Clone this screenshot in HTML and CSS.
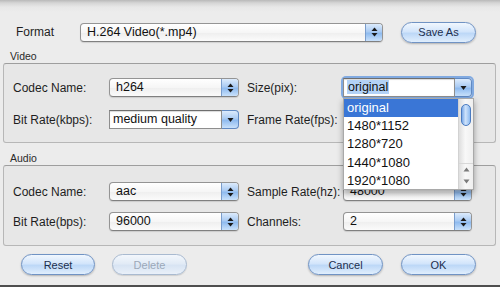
FILE: index.html
```html
<!DOCTYPE html>
<html>
<head>
<meta charset="utf-8">
<link rel="stylesheet" href="styles.css">
</head>
<body>
<div class="window">
  <div class="format-row">
    <span class="lbl format-lbl">Format</span>
    <div class="popup format-popup">
      <span class="val">H.264 Video(*.mp4)</span>
      <span class="stepper"><svg width="7" height="10" viewBox="0 0 7 10"><polygon points="3.5,0.5 6.5,4 0.5,4" fill="#1a1a1a"/><polygon points="0.5,6 6.5,6 3.5,9.5" fill="#1a1a1a"/></svg></span>
    </div>
    <button class="btn saveas">Save As</button>
  </div>

  <div class="group-title">Video</div>
  <div class="group video">
    <span class="lbl">Codec Name:</span>
    <div class="popup">
      <span class="val">h264</span>
      <span class="stepper"><svg width="7" height="10" viewBox="0 0 7 10"><polygon points="3.5,0.5 6.5,4 0.5,4" fill="#1a1a1a"/><polygon points="0.5,6 6.5,6 3.5,9.5" fill="#1a1a1a"/></svg></span>
    </div>
    <span class="lbl">Size(pix):</span>
    <div class="combo focused">
      <span class="field"><span class="sel">original</span></span>
      <span class="cbtn"><svg width="7" height="6" viewBox="0 0 7 6"><polygon points="0.5,1 6.5,1 3.5,5" fill="#1a1a1a"/></svg></span>
      <div class="list">
        <div class="items">
          <div class="item hl">original</div>
          <div class="item">1480*1152</div>
          <div class="item">1280*720</div>
          <div class="item">1440*1080</div>
          <div class="item">1920*1080</div>
        </div>
        <div class="scroll">
          <div class="thumb"></div>
          <div class="arrows">
            <svg width="7" height="5" viewBox="0 0 7 5"><polygon points="3.5,0.5 6.5,4.5 0.5,4.5" fill="#7a7a7a"/></svg>
            <svg width="7" height="5" viewBox="0 0 7 5"><polygon points="0.5,0.5 6.5,0.5 3.5,4.5" fill="#7a7a7a"/></svg>
          </div>
        </div>
      </div>
    </div>
    <span class="lbl">Bit Rate(kbps):</span>
    <div class="combo">
      <span class="field">medium quality</span>
      <span class="cbtn"><svg width="7" height="6" viewBox="0 0 7 6"><polygon points="0.5,1 6.5,1 3.5,5" fill="#1a1a1a"/></svg></span>
    </div>
    <span class="lbl">Frame Rate(fps):</span>
    <div class="popup">
      <span class="val"></span>
      <span class="stepper"></span>
    </div>
  </div>

  <div class="group-title audio-title">Audio</div>
  <div class="group audio">
    <span class="lbl">Codec Name:</span>
    <div class="popup">
      <span class="val">aac</span>
      <span class="stepper"><svg width="7" height="10" viewBox="0 0 7 10"><polygon points="3.5,0.5 6.5,4 0.5,4" fill="#1a1a1a"/><polygon points="0.5,6 6.5,6 3.5,9.5" fill="#1a1a1a"/></svg></span>
    </div>
    <span class="lbl">Sample Rate(hz):</span>
    <div class="popup">
      <span class="val">48000</span>
      <span class="stepper"><svg width="7" height="10" viewBox="0 0 7 10"><polygon points="3.5,0.5 6.5,4 0.5,4" fill="#1a1a1a"/><polygon points="0.5,6 6.5,6 3.5,9.5" fill="#1a1a1a"/></svg></span>
    </div>
    <span class="lbl">Bit Rate(bps):</span>
    <div class="popup">
      <span class="val">96000</span>
      <span class="stepper"><svg width="7" height="10" viewBox="0 0 7 10"><polygon points="3.5,0.5 6.5,4 0.5,4" fill="#1a1a1a"/><polygon points="0.5,6 6.5,6 3.5,9.5" fill="#1a1a1a"/></svg></span>
    </div>
    <span class="lbl">Channels:</span>
    <div class="popup">
      <span class="val">2</span>
      <span class="stepper"><svg width="7" height="10" viewBox="0 0 7 10"><polygon points="3.5,0.5 6.5,4 0.5,4" fill="#1a1a1a"/><polygon points="0.5,6 6.5,6 3.5,9.5" fill="#1a1a1a"/></svg></span>
    </div>
  </div>

  <div class="button-row">
    <button class="btn">Reset</button>
    <button class="btn disabled">Delete</button>
    <button class="btn cancel">Cancel</button>
    <button class="btn ok">OK</button>
  </div>
</div>
</body>
</html>
```
FILE: styles.css
```css
* { box-sizing: border-box; margin: 0; padding: 0; }
html, body { width: 500px; height: 287px; overflow: hidden; }
body {
  font-family: "Liberation Sans", Arial, sans-serif;
  color: #1d1d1d;
  background: #ececec;
}
.window {
  height: 287px;
  display: flex;
  flex-direction: column;
  padding-top: 22px;
  background: linear-gradient(#b9b9b9 0, #d6d6d6 3px, #e8e8e8 7px, #ececec 12px);
  border-bottom: 2px solid #4e4e4e;
}
.lbl { font-size: 12px; white-space: nowrap; align-self: center; color: #1e1e1e; }

.format-row { display: flex; align-items: center; height: 20px; padding-left: 16px; }
.format-lbl { width: 64px; }
.format-popup { width: 303px; height: 18px; }
.saveas { margin-left: 18px; width: 75px; }

.popup {
  display: flex;
  height: 19px;
  border: 1px solid #949494;
  border-bottom-color: #808080;
  border-radius: 4px;
  overflow: hidden;
  background: linear-gradient(#ffffff, #f6f6f6 50%, #eeeeee 51%, #fbfbfb);
  box-shadow: 0 1px 1px rgba(0,0,0,0.12);
}
.popup .val {
  flex: 1;
  font-size: 12.5px;
  line-height: 17px;
  padding-left: 6px;
  color: #111;
  white-space: nowrap;
  overflow: hidden;
}
.format-popup .val { line-height: 16px; }
.stepper {
  width: 17px;
  display: flex;
  align-items: center;
  justify-content: center;
  border-left: 1px solid #7a9dcc;
  background: linear-gradient(#dcebfc 0%, #aacbf3 45%, #8fbbef 55%, #c9e1fb 100%);
}

.group-title {
  margin: 8px 0 0 10px;
  height: 13px;
  font-size: 10.5px;
  line-height: 13px;
  color: #2a2a2a;
}
.audio-title { margin-top: 9px; }
.group {
  margin: 0 4px 0 3px;
  border: 1px solid #b7b7b7;
  border-top-color: #9e9e9e;
  border-radius: 3px;
  background: #e7e7e7;
  display: grid;
  grid-template-columns: 88px 130px 88px 129px;
  grid-auto-rows: 19px;
  column-gap: 8px;
  padding-left: 9px;
}
.video { padding-top: 14px; row-gap: 13px; padding-bottom: 13px; }
.audio { padding-top: 16px; row-gap: 11px; padding-bottom: 14px; }

.combo { display: flex; height: 19px; position: relative; }
.combo .field {
  flex: 1;
  background: #fff;
  border: 1px solid #8e8e8e;
  border-top-color: #6e6e6e;
  box-shadow: inset 0 1px 1px rgba(0,0,0,0.15);
  font-size: 12.5px;
  line-height: 17px;
  padding-left: 3px;
  color: #111;
  white-space: nowrap;
}
.combo .cbtn {
  width: 17px;
  display: flex;
  align-items: center;
  justify-content: center;
  border: 1px solid #6089c2;
  border-left: none;
  border-radius: 0 4px 4px 0;
  background: linear-gradient(#dcebfc 0%, #aacbf3 45%, #8fbbef 55%, #c9e1fb 100%);
}
.combo.focused { border-radius: 3px; box-shadow: 0 0 0 2px rgba(104,155,224,0.8); }
.sel { background: #b3d2f6; padding: 0 1px; }

.list {
  position: absolute;
  left: 0;
  top: 20px;
  width: 131px;
  height: 92px;
  z-index: 10;
  background: #fff;
  border: 1px solid #a9a9a9;
  box-shadow: 0 3px 6px rgba(0,0,0,0.35);
  display: flex;
}
.items { flex: 1; }
.item {
  height: 18.2px;
  line-height: 18px;
  font-size: 13px;
  padding-left: 3px;
  color: #111;
}
.item.hl { background: #3a76d6; color: #fff; }
.scroll {
  width: 15px;
  position: relative;
  border-left: 1px solid #d2d2d2;
  background: linear-gradient(to right, #dedede, #f8f8f8 45%, #efefef);
}
.thumb {
  position: absolute;
  left: 2px;
  top: 5px;
  width: 10px;
  height: 22px;
  border-radius: 5px;
  border: 1px solid #4b7bc0;
  background: linear-gradient(to right, #7aa9e8, #cfe3fb 45%, #8dbaf0);
}
.arrows {
  position: absolute;
  left: 0;
  right: 0;
  bottom: 2px;
  height: 24px;
  display: flex;
  flex-direction: column;
  align-items: center;
  justify-content: space-around;
  border-top: 1px solid #d8d8d8;
}

.button-row {
  display: flex;
  margin-top: 8px;
  padding: 0 24px 0 21px;
}
.btn {
  height: 21px;
  width: 75px;
  border: 1px solid #7093c4;
  border-radius: 11px;
  font-family: "Liberation Sans", Arial, sans-serif;
  font-size: 11px;
  color: #1c2f4e;
  background: linear-gradient(#f1f7fe 0%, #d3e5fb 45%, #bdd8f7 55%, #e0eefd 100%);
  box-shadow: 0 1px 2px rgba(0,0,0,0.25);
}
.button-row .btn:first-child { width: 74px; }
.btn.disabled {
  margin-left: 17px;
  color: #9ba8b9;
  border-color: #a9bad0;
  background: linear-gradient(#f3f7fc 0%, #e2ebf6 45%, #d8e4f3 55%, #e9f0f9 100%);
  box-shadow: 0 1px 1px rgba(0,0,0,0.12);
}
.btn.cancel { margin-left: auto; }
.btn.ok { margin-left: 18px; }
```
